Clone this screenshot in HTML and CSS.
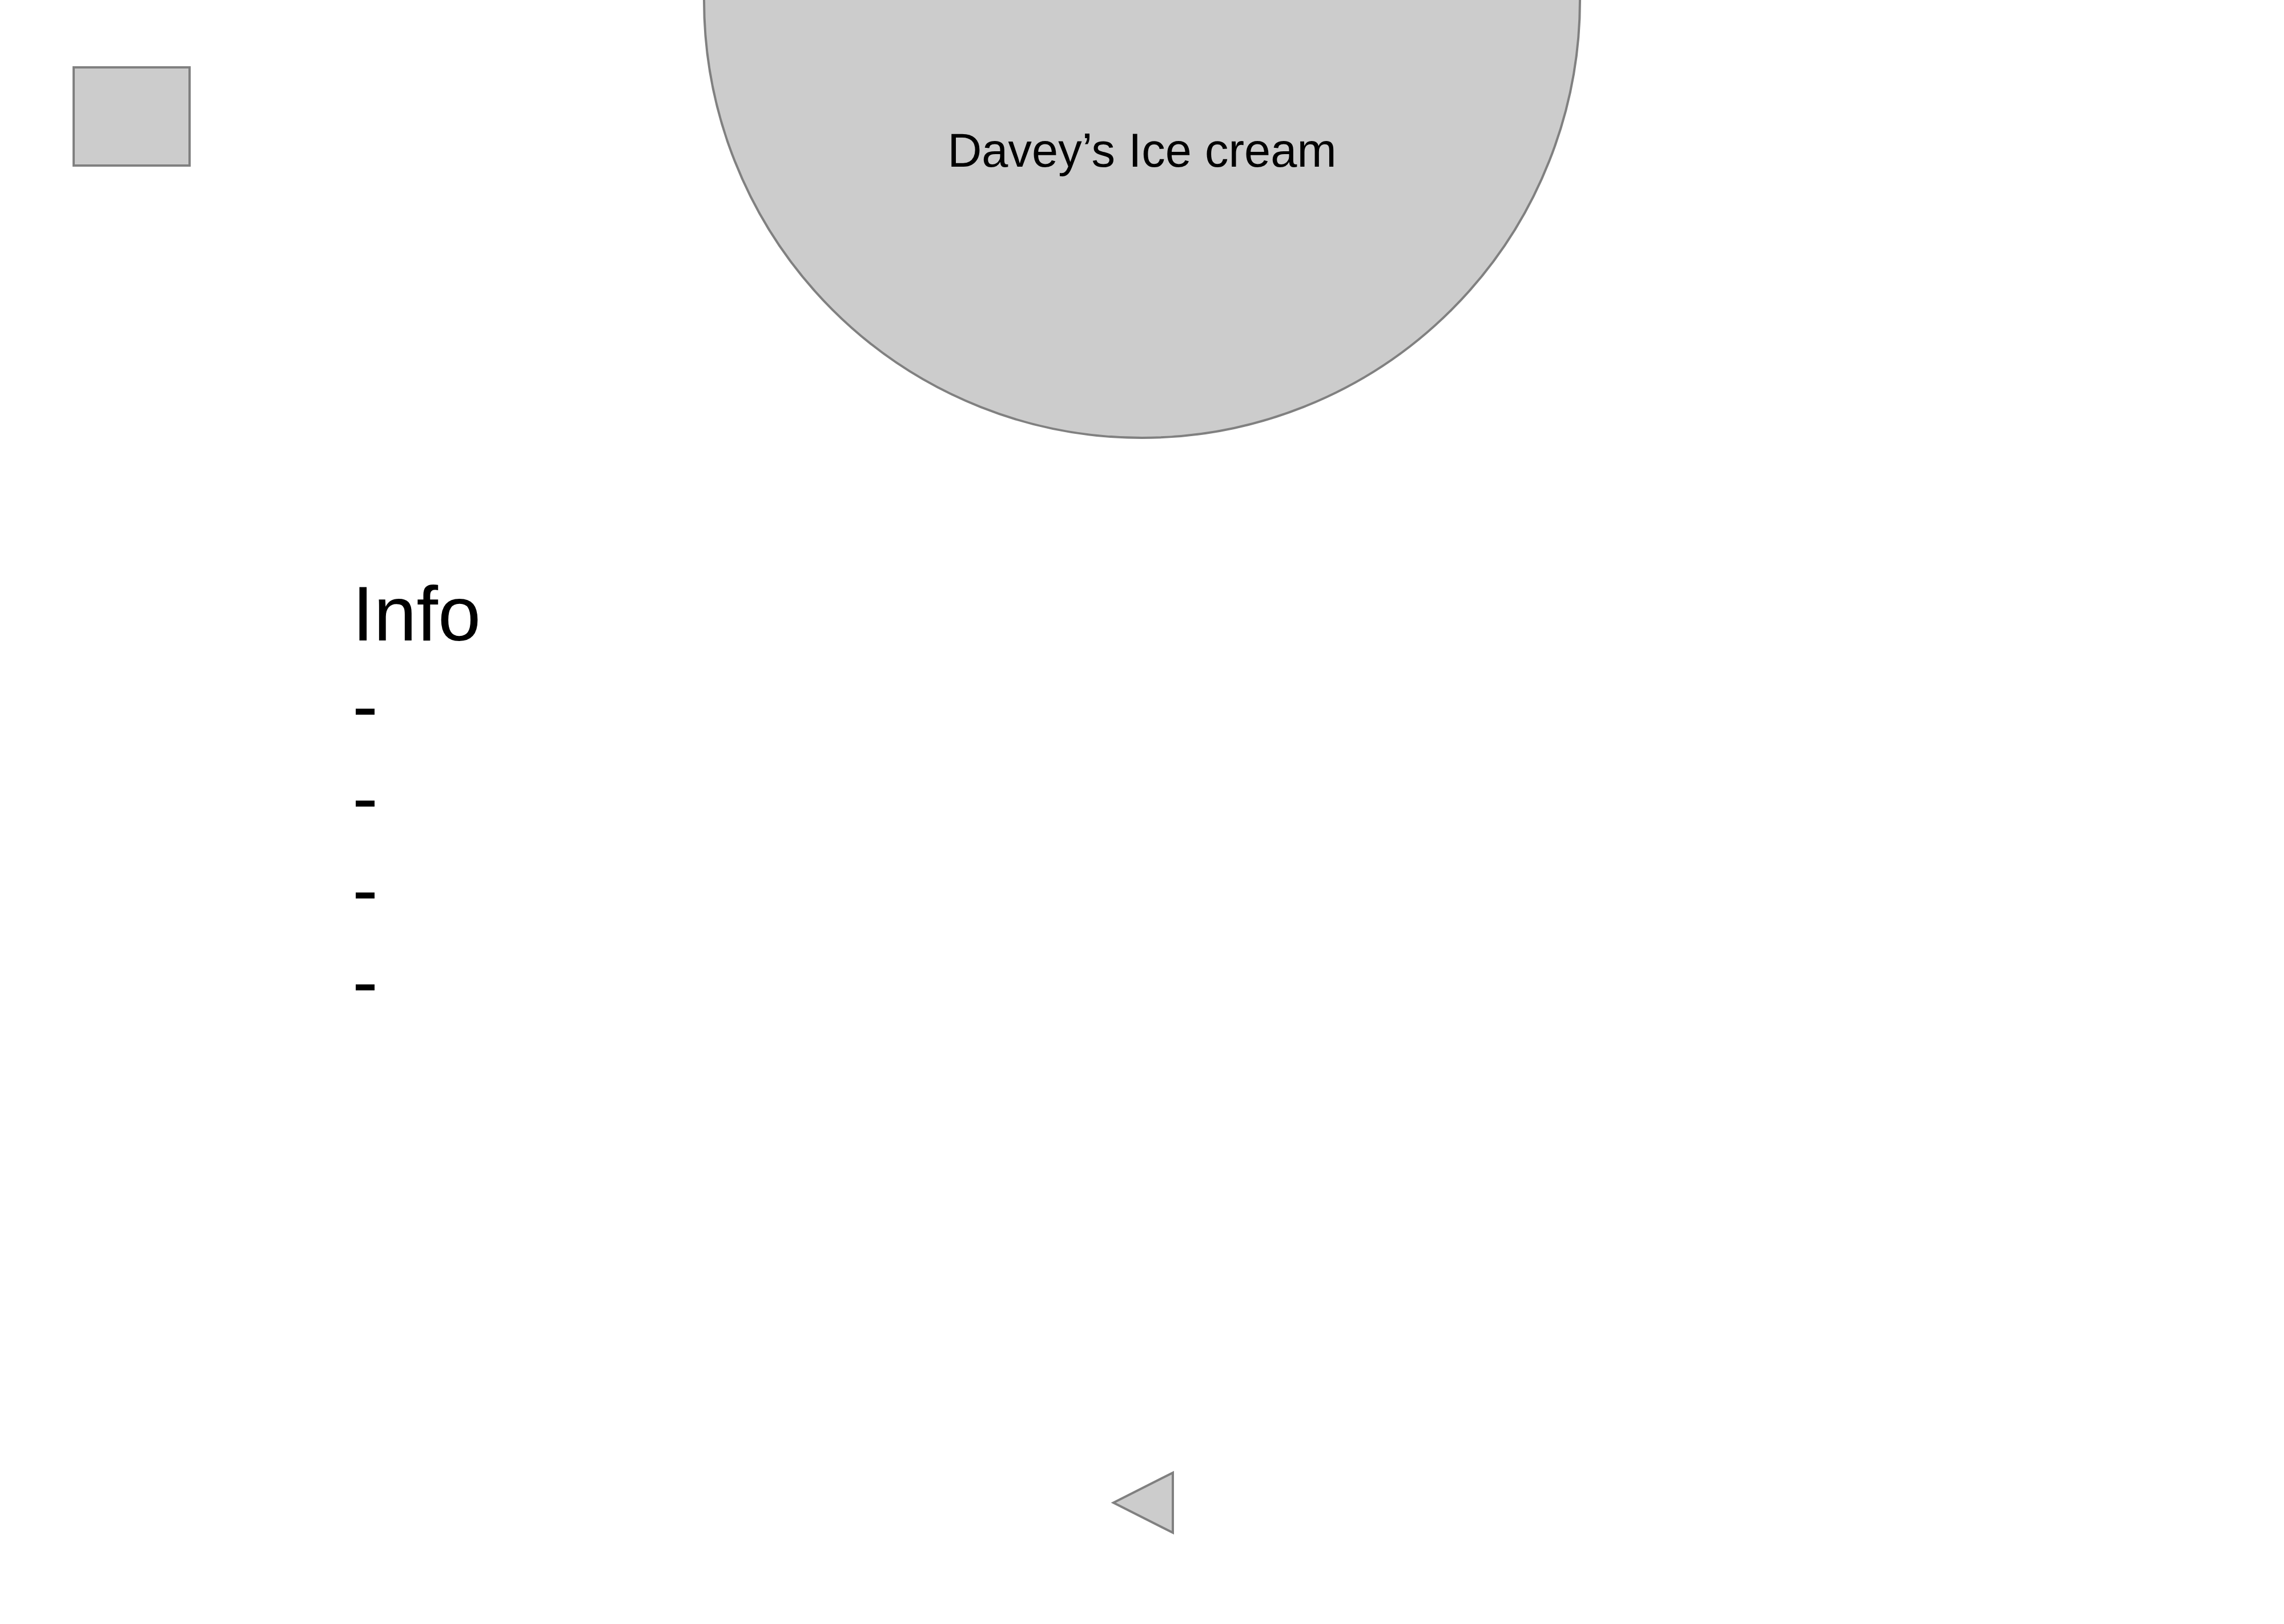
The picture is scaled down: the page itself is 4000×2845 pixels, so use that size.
FILE: index.html
```html
<!DOCTYPE html>
<html lang="en">
<head>
<meta charset="utf-8">
<title>Davey's Ice cream</title>
<link rel="stylesheet" href="styles.css">
</head>
<body>
<div class="page">
  <header class="header">
    <div class="menu-box"></div>
    <div class="logo-circle"><span class="logo-text">Davey’s Ice cream</span></div>
  </header>
  <section class="info">
    <div class="info-line">Info</div>
    <div class="info-line">-</div>
    <div class="info-line">-</div>
    <div class="info-line">-</div>
    <div class="info-line">-</div>
  </section>
  <nav class="footer-nav">
    <svg class="back-arrow" width="116" height="116" viewBox="0 0 116 116" aria-label="Back">
      <polygon points="8,58.5 112,6 112,111" fill="#cccccc" stroke="#808080" stroke-width="4"/>
    </svg>
  </nav>
</div>
</body>
</html>
```
FILE: styles.css
```css
html, body {
  margin: 0;
  padding: 0;
  background: #ffffff;
}
.page {
  width: 4000px;
  height: 2845px;
  overflow: hidden;
  font-family: "Liberation Sans", Arial, sans-serif;
  color: #000000;
}
.header {
  display: grid;
  grid-template-columns: 1fr auto 1fr;
  align-items: start;
}
.menu-box {
  justify-self: start;
  box-sizing: border-box;
  width: 207px;
  height: 176px;
  margin: 116px 0 0 127px;
  background: #cccccc;
  border: 4px solid #808080;
}
.logo-circle {
  box-sizing: border-box;
  width: 1538px;
  height: 1538px;
  margin-top: -769px;
  border-radius: 50%;
  background: #cccccc;
  border: 4px solid #808080;
  display: flex;
  justify-content: center;
  align-items: flex-start;
  padding-top: 987px;
}
.logo-text {
  font-size: 83px;
  line-height: 1;
  white-space: nowrap;
}
.info {
  margin-top: 226px;
  padding-left: 617px;
  font-size: 135px;
  line-height: 161px;
}
.footer-nav {
  display: flex;
  justify-content: center;
  margin-top: 774px;
}
.back-arrow {
  display: block;
}
```
